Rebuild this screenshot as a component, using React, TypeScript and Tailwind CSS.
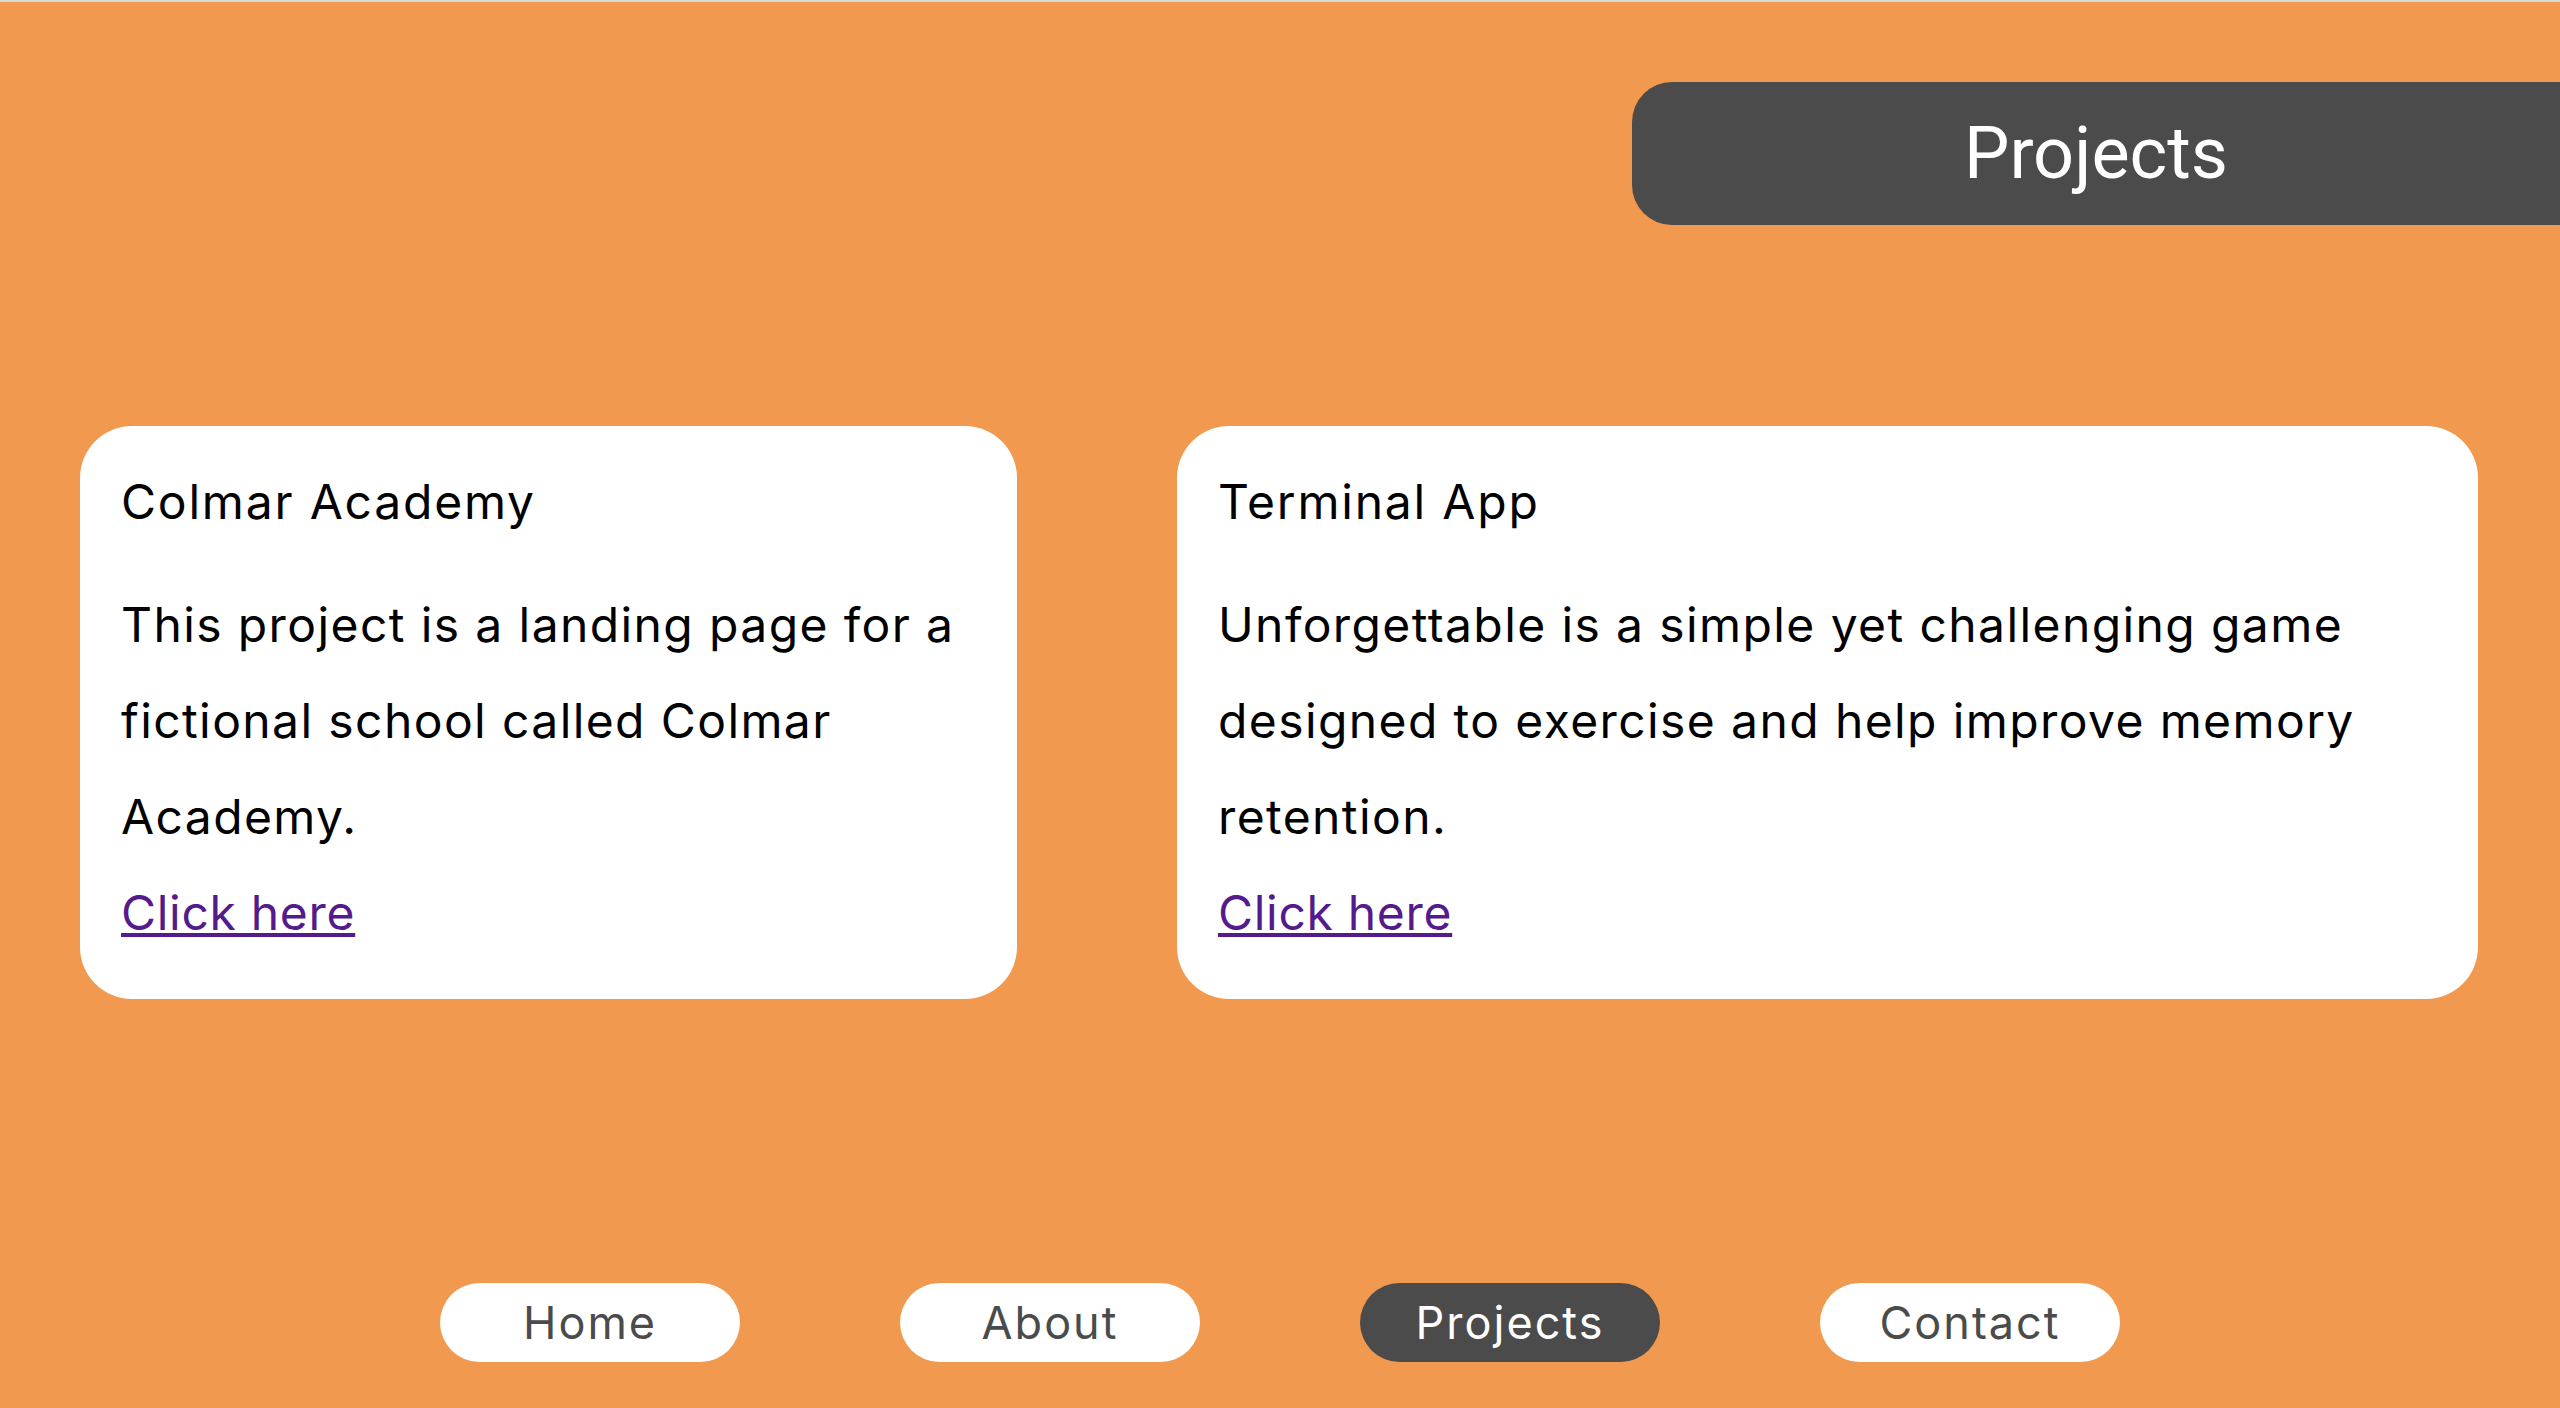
const projects = [
  {
    title: "Colmar Academy",
    body: "This project is a landing page for a fictional school called Colmar Academy.",
    width: "w-[937px]",
  },
  {
    title: "Terminal App",
    body: "Unforgettable is a simple yet challenging game designed to exercise and help improve memory retention.",
    width: "w-[1301px]",
  },
];

const links = ["Home", "About", "Projects", "Contact"];

export default function App() {
  return (
    <div className="min-h-screen bg-[#f0994f] font-['Inter',sans-serif] border-t-2 border-[#d8d8d8]">
      {/* Page title tab */}
      <header className="flex justify-end pt-[80px]">
        <div className="w-[928px] h-[143px] rounded-l-[40px] bg-[#4b4b4b] flex items-center justify-center">
          <h1 className="text-[72px] leading-none text-white font-['Roboto',sans-serif]">Projects</h1>
        </div>
      </header>

      {/* Project cards */}
      <main className="flex items-start gap-[160px] pl-[80px] mt-[201px]">
        {projects.map((p) => (
          <div key={p.title} className={`${p.width} bg-white rounded-[52px] px-[41px] pt-[47px] pb-[38px] text-black`}>
            <h2 className="text-[48px] leading-[58px] font-normal tracking-[1.8px]">{p.title}</h2>
            <p className="mt-[46px] text-[48px] leading-[96px] tracking-[1.4px]">{p.body}</p>
            <a href="#" className="block text-[48px] leading-[96px] tracking-[0.7px] text-[#551a8b] underline">
              Click here
            </a>
          </div>
        ))}
      </main>

      {/* Bottom nav */}
      <nav className="flex justify-center gap-[160px] mt-[284px] pb-[45px]">
        {links.map((l) => (
          <a
            key={l}
            href="#"
            className={`w-[300px] h-[79px] rounded-full flex items-center justify-center text-[45px] tracking-[2px] ${
              l === "Projects" ? "bg-[#4b4b4b] text-white" : "bg-white text-[#4b4b4b]"
            }`}
          >
            {l}
          </a>
        ))}
      </nav>
    </div>
  );
}
